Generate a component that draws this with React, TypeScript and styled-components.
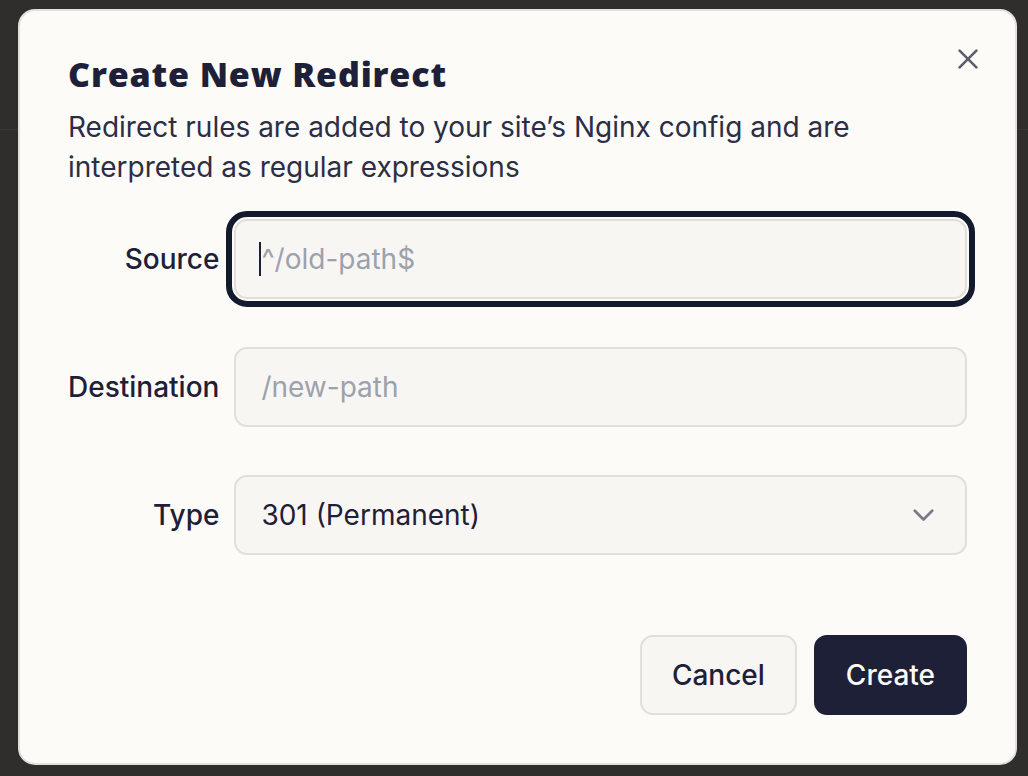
import React from "react";
import styled, { createGlobalStyle } from "styled-components";

const GlobalStyle = createGlobalStyle`
  html, body {
    margin: 0;
    padding: 0;
    background: #302e2c;
    font-family: Inter, "Noto Sans", "Liberation Sans", sans-serif;
  }
  * { box-sizing: border-box; }
`;

const Page = styled.div`
  width: 100vw;
  height: 100vh;
  background: #302e2c;
  overflow: hidden;
`;

const BackdropHeader = styled.div`
  height: 130px;
  border-bottom: 1px solid #393734;
`;

const Overlay = styled.div`
  position: fixed;
  inset: 0;
  display: flex;
  align-items: flex-start;
  justify-content: flex-start;
  padding: 9px 0 0 18px;
`;

const Dialog = styled.div`
  position: relative;
  width: 999px;
  background: #fdfbf7;
  border: 2px solid #e3e0db;
  border-radius: 17px;
  padding: 43px 48px 48px 48px;
  display: flex;
  flex-direction: column;
`;

const CloseButton = styled.button`
  position: absolute;
  top: 28px;
  right: 27px;
  width: 40px;
  height: 40px;
  padding: 0;
  border: none;
  background: transparent;
  display: flex;
  align-items: center;
  justify-content: center;
  color: #5d5e6b;
  cursor: pointer;
`;

const Title = styled.h2`
  margin: 0;
  font-family: "Open Sans", Inter, sans-serif;
  font-size: 34px;
  line-height: 40px;
  font-weight: 800;
  color: #1e2038;
  letter-spacing: 0.85px;
`;

const Description = styled.p`
  margin: 13px 0 0 0;
  font-size: 28px;
  line-height: 40px;
  font-weight: 400;
  color: #2b2e45;
  max-width: 880px;
`;

const Form = styled.div`
  margin-top: 32px;
  display: grid;
  grid-template-columns: auto 1fr;
  column-gap: 15px;
  row-gap: 48px;
  align-items: center;
`;

const Label = styled.label`
  text-align: right;
  font-size: 28px;
  font-weight: 500;
  color: #1e2038;
  white-space: nowrap;
`;

const FieldWrap = styled.div`
  position: relative;
  display: flex;
`;

const Input = styled.input<{ $focused?: boolean }>`
  width: 100%;
  height: 80px;
  padding: 0 25px;
  border: 2px solid #e2dfda;
  border-radius: 13px;
  background: #f8f6f2;
  font-family: inherit;
  font-size: 28px;
  color: #1e2038;
  outline: ${(p) => (p.$focused ? "6px solid #141a2e" : "none")};
  outline-offset: 2px;
  &::placeholder {
    color: #9ca1ae;
  }
`;

const Caret = styled.span`
  position: absolute;
  left: 25px;
  top: 23px;
  width: 2px;
  height: 34px;
  background: #1e2038;
`;

const SelectBox = styled.button`
  width: 100%;
  height: 80px;
  padding: 0 31px 0 25px;
  border: 2px solid #e2dfda;
  border-radius: 13px;
  background: #f8f6f2;
  font-family: inherit;
  font-size: 28px;
  font-weight: 400;
  color: #1e2038;
  display: flex;
  align-items: center;
  justify-content: space-between;
  cursor: pointer;
`;

const Footer = styled.div`
  margin-top: 80px;
  display: flex;
  justify-content: flex-end;
  gap: 17px;
`;

const Button = styled.button<{ $primary?: boolean }>`
  height: 80px;
  padding: 0 30px;
  border-radius: 13px;
  font-family: inherit;
  font-size: 28px;
  font-weight: 500;
  cursor: pointer;
  border: 2px solid ${(p) => (p.$primary ? "#1e2038" : "#e2dfda")};
  background: ${(p) => (p.$primary ? "#1e2038" : "#f8f6f2")};
  color: ${(p) => (p.$primary ? "#fdfbf7" : "#1e2038")};
`;

const XIcon = () => (
  <svg width="20" height="20" viewBox="0 0 20 20" fill="none">
    <path
      d="M1.6 1.6 L18.4 18.4 M18.4 1.6 L1.6 18.4"
      stroke="currentColor"
      strokeWidth="2.6"
      strokeLinecap="round"
    />
  </svg>
);

const Chevron = () => (
  <svg width="21" height="13" viewBox="0 0 21 13" fill="none">
    <path
      d="M1.8 1.8 L10.5 10.5 L19.2 1.8"
      stroke="#7a7a85"
      strokeWidth="2.7"
      strokeLinecap="round"
      strokeLinejoin="round"
    />
  </svg>
);

export default function App() {
  return (
    <Page>
      <GlobalStyle />
      <BackdropHeader />
      <Overlay>
        <Dialog role="dialog" aria-labelledby="dlg-title">
          <CloseButton aria-label="Close">
            <XIcon />
          </CloseButton>
          <Title id="dlg-title">Create New Redirect</Title>
          <Description>
            Redirect rules are added to your site’s Nginx config and are
            interpreted as regular expressions
          </Description>
          <Form>
            <Label htmlFor="src">Source</Label>
            <FieldWrap>
              <Input id="src" $focused placeholder="^/old-path$" readOnly />
              <Caret />
            </FieldWrap>
            <Label htmlFor="dst">Destination</Label>
            <FieldWrap>
              <Input id="dst" placeholder="/new-path" readOnly />
            </FieldWrap>
            <Label>Type</Label>
            <SelectBox type="button">
              <span>301 (Permanent)</span>
              <Chevron />
            </SelectBox>
          </Form>
          <Footer>
            <Button type="button">Cancel</Button>
            <Button type="button" $primary>
              Create
            </Button>
          </Footer>
        </Dialog>
      </Overlay>
    </Page>
  );
}
